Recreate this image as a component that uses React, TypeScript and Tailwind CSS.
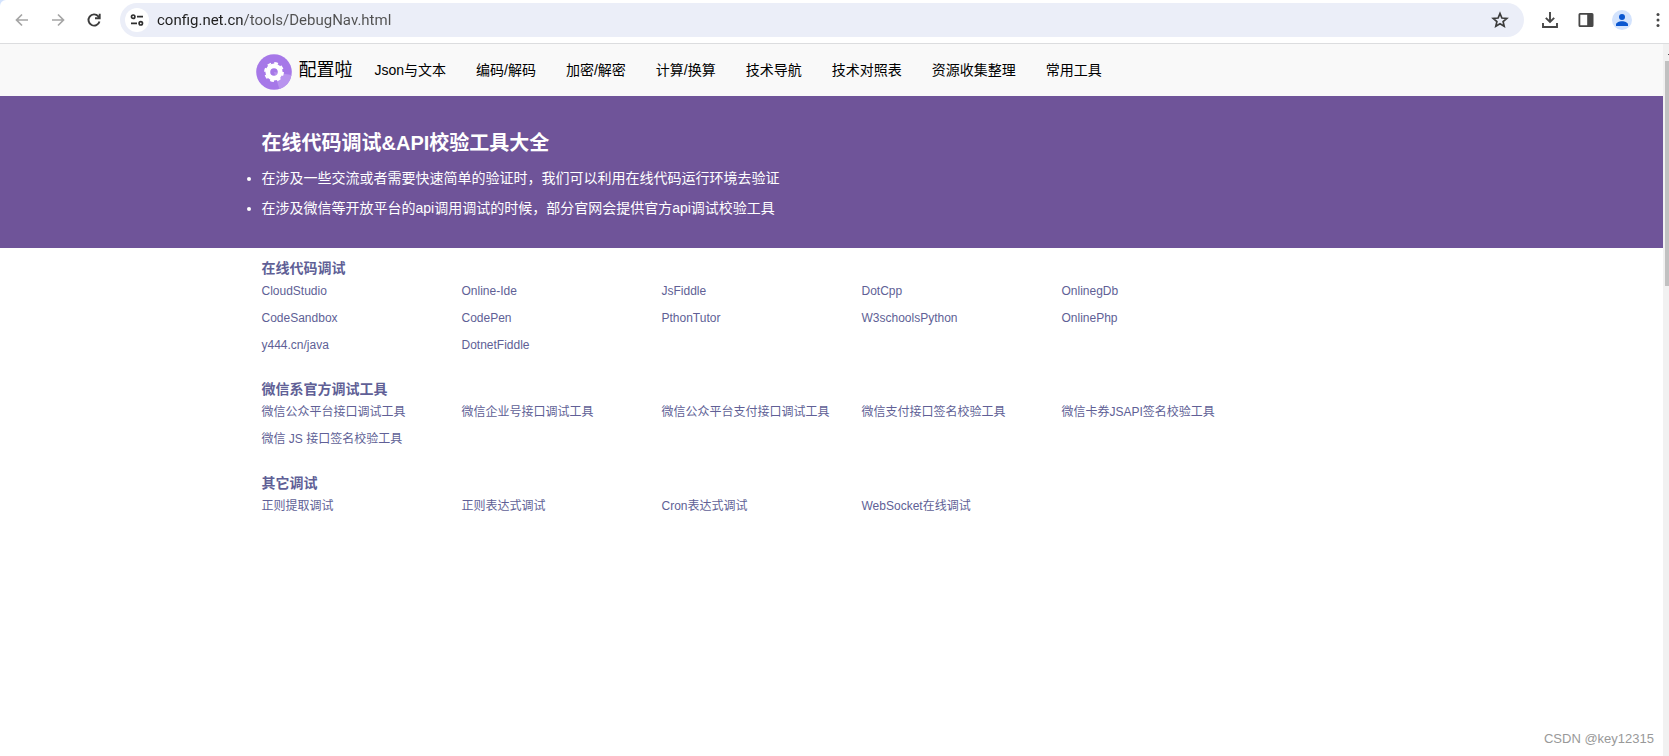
import React from "react";

type Link = {
  label: string;
  href: string;
};

type Section = {
  title: string;
  links: Link[];
};

const NAV_ITEMS = [
  "Json与文本",
  "编码/解码",
  "加密/解密",
  "计算/换算",
  "技术导航",
  "技术对照表",
  "资源收集整理",
  "常用工具",
];

const NOTES = [
  "在涉及一些交流或者需要快速简单的验证时，我们可以利用在线代码运行环境去验证",
  "在涉及微信等开放平台的api调用调试的时候，部分官网会提供官方api调试校验工具",
];

const SECTIONS: Section[] = [
  {
    title: "在线代码调试",
    links: [
      { label: "CloudStudio", href: "#cloudstudio" },
      { label: "Online-Ide", href: "#online-ide" },
      { label: "JsFiddle", href: "#jsfiddle" },
      { label: "DotCpp", href: "#dotcpp" },
      { label: "OnlinegDb", href: "#onlinegdb" },
      { label: "CodeSandbox", href: "#codesandbox" },
      { label: "CodePen", href: "#codepen" },
      { label: "PthonTutor", href: "#pythontutor" },
      { label: "W3schoolsPython", href: "#w3schools" },
      { label: "OnlinePhp", href: "#onlinephp" },
      { label: "y444.cn/java", href: "#java" },
      { label: "DotnetFiddle", href: "#dotnetfiddle" },
    ],
  },
  {
    title: "微信系官方调试工具",
    links: [
      { label: "微信公众平台接口调试工具", href: "#wx-mp" },
      { label: "微信企业号接口调试工具", href: "#wx-qy" },
      { label: "微信公众平台支付接口调试工具", href: "#wx-mp-pay" },
      { label: "微信支付接口签名校验工具", href: "#wx-pay-sign" },
      { label: "微信卡券JSAPI签名校验工具", href: "#wx-card" },
      { label: "微信 JS 接口签名校验工具", href: "#wx-js" },
    ],
  },
  {
    title: "其它调试",
    links: [
      { label: "正则提取调试", href: "#regex-extract" },
      { label: "正则表达式调试", href: "#regex" },
      { label: "Cron表达式调试", href: "#cron" },
      { label: "WebSocket在线调试", href: "#websocket" },
    ],
  },
];

function BrowserBar() {
  return (
    <div className="bg-[#d3e3fd]">
      <div className="flex h-11 items-start rounded-tl-md border-b border-[#dcdddf] bg-white pt-[3px]">
        <div className="flex h-[34px] w-[120px] shrink-0 items-center gap-4 pl-3">
          <button aria-label="Back" className="text-[#a5a5a5]">
            <svg className="size-5" viewBox="0 0 20 20" fill="none" stroke="currentColor" strokeWidth="1.7">
              <path d="M16 10H5M10 4.5 4.5 10l5.500 5.500" />
            </svg>
          </button>
          <button aria-label="Forward" className="text-[#a5a5a5]">
            <svg className="size-5" viewBox="0 0 20 20" fill="none" stroke="currentColor" strokeWidth="1.7">
              <path d="M4 10h11M10 4.500 15.500 10 10 15.500" />
            </svg>
          </button>
          <button aria-label="Reload" className="text-[#3c3c3c]">
            <svg className="size-5" viewBox="0 0 20 20" fill="none" stroke="currentColor" strokeWidth="1.9">
              <path d="M15.500 11.500A5.600 5.600 0 1 1 14.300 6.300L15.500 7.800" />
              <path d="M15.700 3.800V8.300H11" />
            </svg>
          </button>
        </div>

        <div className="flex h-[34px] flex-1 items-center rounded-full bg-[#ebeef8] pr-3 pl-[5px]">
          <button
            aria-label="Site information"
            className="flex size-6 items-center justify-center rounded-full bg-white text-[#2f2f2f]"
          >
            <svg className="size-4" viewBox="0 0 16 16" fill="none" stroke="currentColor" strokeWidth="1.700">
              <circle cx="4.200" cy="4.700" r="1.700" />
              <path d="M8 4.700h6M2 11.300h6" />
              <circle cx="11.800" cy="11.300" r="1.700" />
            </svg>
          </button>
          <input
            aria-label="Address"
            defaultValue="config.net.cn/tools/DebugNav.html"
            className="ml-2 h-6 flex-1 bg-linear-to-r from-[#1f1f1f] from-[86px] to-[#505050] to-[86px] bg-clip-text font-['Roboto','Noto_Sans_CJK_SC',sans-serif] text-[15px] text-transparent outline-none"
          />
          <button aria-label="Bookmark" className="text-[#3c3c3c]">
            <svg className="size-6" viewBox="0 0 24 24" fill="none" stroke="currentColor" strokeWidth="1.7">
              <path d="m12 5.500 1.900 4.500 4.900.400-3.700 3.200 1.100 4.700-4.200-2.500-4.200 2.500 1.100-4.700-3.700-3.200 4.900-.400z" />
            </svg>
          </button>
        </div>

        <div className="flex h-[34px] shrink-0 items-center gap-4 pr-[1px] pl-4 text-[#474747]">
          <button aria-label="Downloads">
            <svg className="size-5" viewBox="0 0 20 20" fill="none" stroke="currentColor" strokeWidth="1.900">
              <path d="M10 2v9.500M5.800 7.800 10 12l4.200-4.200M3 13v4h14v-4" />
            </svg>
          </button>
          <button aria-label="Side panel">
            <svg className="size-5" viewBox="0 0 20 20">
              <path
                fill="currentColor"
                fillRule="evenodd"
                d="M4 3h12a1.500 1.500 0 0 1 1.500 1.500v11A1.500 1.500 0 0 1 16 17H4a1.500 1.500 0 0 1-1.500-1.500v-11A1.500 1.500 0 0 1 4 3zm.300 1.700v10.600h6.900V4.700z"
              />
            </svg>
          </button>
          <button aria-label="Profile" className="size-5 rounded-full bg-[#d3e3fd] text-[#0b57d0]">
            <svg className="size-5" viewBox="0 0 20 20" fill="currentColor">
              <circle cx="10" cy="7" r="3" />
              <path d="M4 16v-1.500c0-2 3-3.300 6-3.300s6 1.300 6 3.300V16z" />
            </svg>
          </button>
          <button aria-label="Menu">
            <svg className="size-5" viewBox="0 0 20 20" fill="currentColor">
              <circle cx="10" cy="4.500" r="1.500" />
              <circle cx="10" cy="10" r="1.500" />
              <circle cx="10" cy="15.500" r="1.500" />
            </svg>
          </button>
        </div>
      </div>
    </div>
  );
}

function Logo() {
  return (
    <svg className="size-9" viewBox="0 0 36 36">
      <circle cx="18" cy="18" r="17.800" fill="#a678e8" />
      <path d="M18 18 35.500 21A17.800 17.800 0 0 1 23.500 35z" fill="#b893ee" />
      <circle cx="18" cy="18" r="9" fill="none" stroke="#fff" strokeWidth="1.800" strokeDasharray="3.800 3.268" />
      <circle cx="18" cy="18" r="6.200" fill="none" stroke="#fff" strokeWidth="4.800" />
    </svg>
  );
}

function SiteHeader() {
  return (
    <header className="bg-[#f9f9f9]">
      <div className="mx-auto flex h-[52px] max-w-[1170px] items-center px-[9px] pt-[3px] text-black">
        <a href="#home" className="flex items-center gap-[7px] text-lg leading-6">
          <Logo />
          <span className="pb-1">配置啦</span>
        </a>
        <nav className="ml-[22px] flex gap-[30px] pb-[3px] text-sm leading-5">
          {NAV_ITEMS.map((item) => (
            <a key={item} href={`#${item}`} className="whitespace-nowrap">
              {item}
            </a>
          ))}
        </nav>
      </div>
    </header>
  );
}

function Hero() {
  return (
    <div className="bg-[#6f5499] text-white">
      <div className="mx-auto max-w-[1170px] px-[15px] pt-[31px] pb-[25px]">
        <h1 className="mb-1 text-xl leading-8 font-bold">在线代码调试&amp;API校验工具大全</h1>
        <ul className="list-disc text-sm leading-[30px]">
          {NOTES.map((note) => (
            <li key={note}>{note}</li>
          ))}
        </ul>
      </div>
    </div>
  );
}

function LinkSection({ section }: { section: Section }) {
  return (
    <section>
      <h2 className="text-sm leading-5 font-bold">{section.title}</h2>
      <ul className="flex flex-wrap text-xs leading-[27px]">
        {section.links.map((link) => (
          <li key={link.label} className="w-[200px]">
            <a href={link.href} className="whitespace-nowrap hover:underline">
              {link.label}
            </a>
          </li>
        ))}
      </ul>
    </section>
  );
}

// Only the left edge of the scrollbar fits in the window.
function Scrollbar() {
  return (
    <div className="flex w-[6px] shrink-0 flex-col items-end bg-[#f1f1f1] pt-[10px]">
      <div className="mb-[6px] h-px w-px bg-[#505050]" />
      <div className="h-[225px] w-1 bg-[#c1c1c1]" />
    </div>
  );
}

export default function App() {
  return (
    <div className="flex min-h-screen flex-col bg-white font-['Liberation_Sans','Noto_Sans_CJK_SC',sans-serif]">
      <BrowserBar />
      <div className="flex flex-1">
        <div className="flex min-w-0 flex-1 flex-col">
          <SiteHeader />
          <Hero />
          <main className="mx-auto flex w-full max-w-[1170px] flex-col gap-5 px-[15px] pt-[10px] text-[#605f96]">
            {SECTIONS.map((section) => (
              <LinkSection key={section.title} section={section} />
            ))}
          </main>
          <footer className="mt-auto pr-[9px] pb-[7px] text-right text-[13px] leading-5 text-[#999]">
            CSDN @key12315
          </footer>
        </div>
        <Scrollbar />
      </div>
    </div>
  );
}
